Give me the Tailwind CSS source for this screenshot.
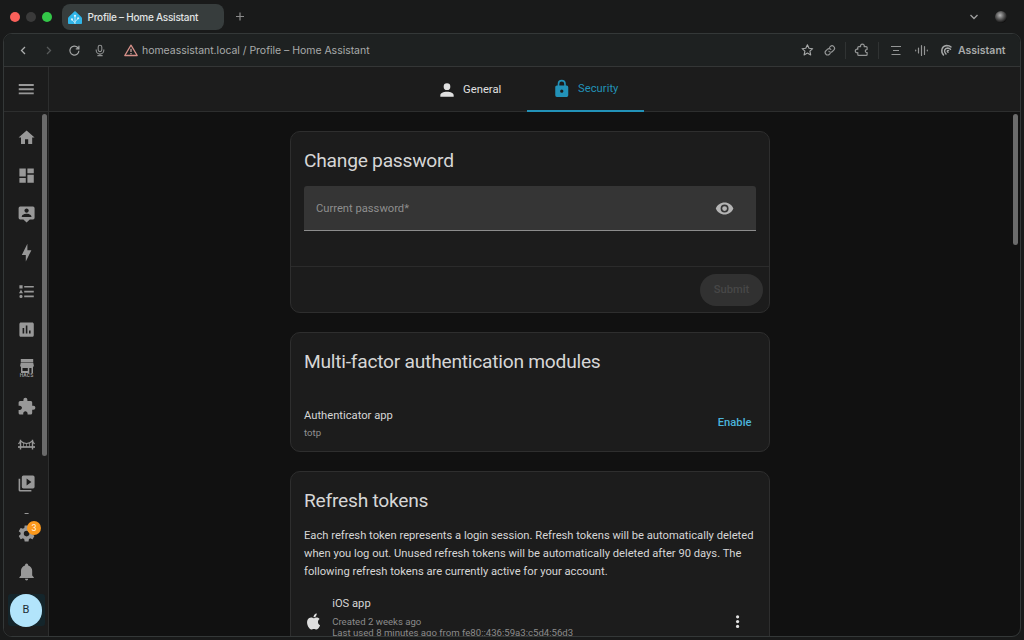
<!DOCTYPE html>
<html lang="en">
<head>
<meta charset="utf-8">
<title>Profile – Home Assistant</title>
<script src="https://cdn.jsdelivr.net/npm/@tailwindcss/browser@4"></script>
</head>
<body class="w-[1024px] h-[640px] overflow-hidden bg-[#191a1a] font-[Roboto,sans-serif] flex flex-col">

<!-- Tab strip -->
<div class="h-[33px] shrink-0 flex items-center pl-[10px] pr-[17px]">
  <div class="flex gap-[6px]">
    <span class="size-[10px] rounded-full bg-[#f9605a]"></span>
    <span class="size-[10px] rounded-full bg-[#3a3a3a]"></span>
    <span class="size-[10px] rounded-full bg-[#33c748]"></span>
  </div>
  <div class="ml-[10px] mt-[1px] w-[162px] h-[26px] rounded-[8px] bg-[#373d3d] flex items-center pl-[6px] whitespace-nowrap">
    <svg class="mt-[1px] w-[14px] h-[13px]" viewBox="0 0 240 240" preserveAspectRatio="none">
      <path fill="#30b5e8" d="M240 225a15 15 0 0 1-15 15H15a15 15 0 0 1-15-15v-90c0-8 5-20 11-26l98-98c6-6 16-6 22 0l98 98c6 6 11 18 11 26Z"/>
      <path fill="none" stroke="#d8f2fc" stroke-width="15" d="M120 240V92M120 215l-52-52M120 195l54-54"/>
      <circle cx="120" cy="88" r="20" fill="#d8f2fc"/><circle cx="68" cy="155" r="19" fill="#d8f2fc"/><circle cx="174" cy="135" r="19" fill="#d8f2fc"/>
    </svg>
    <span class="ml-[5.500px] font-[Inter,sans-serif] text-[10px] tracking-[-0.240px] font-medium text-[#e2e4e4]">Profile – Home Assistant</span>
  </div>
  <svg class="ml-[11px] size-[10px]" viewBox="0 0 10 10" stroke="#8b8b8b" stroke-width="1.2"><path d="M5 .5v8M1 4.500h8"/></svg>
  <svg class="ml-auto w-[10px] h-[10px]" viewBox="0 0 10 10" fill="none" stroke="#a0a0a0" stroke-width="1.3"><path d="M1.500 3 5 6.500l3.500-3.500"/></svg>
  <span class="ml-[16px] size-[12px] rounded-full bg-[radial-gradient(circle_at_42%_36%,#b4b4b4,#5a5a5a_38%,#0c0c0c_75%)]"></span>
</div>

<!-- Browser window -->
<div class="ml-[3px] w-[1018px] h-[604px] shrink-0 border border-[#343838] rounded-[9px] overflow-hidden flex flex-col bg-[#111111]">

  <!-- Address bar -->
  <div class="h-[33px] shrink-0 bg-[#1e2121] border-b border-[#343636] flex items-center pl-[11px] font-[Inter,sans-serif] text-[#a9abab] whitespace-nowrap">
    <svg class="size-[16px]" viewBox="0 0 16 16" fill="none" stroke="#adafaf" stroke-width="1.3"><path d="M10 5 6.500 8.500l3.500 3.500"/></svg>
    <svg class="ml-[9px] size-[16px]" viewBox="0 0 16 16" fill="none" stroke="#575a5a" stroke-width="1.3"><path d="M7 5l3.500 3.500L7 12"/></svg>
    <svg class="ml-[10px] size-[16px]" viewBox="0 0 16 16" fill="none" stroke="#a3a5a5" stroke-width="1.2"><path d="M12.900 8.700A4.500 4.500 0 1 1 11.700 5.500L12.900 6.700M12.900 3.700v3.100H9.800"/></svg>
    <svg class="ml-[10px] size-[16px]" viewBox="0 0 16 16" fill="none" stroke="#8f9191" stroke-width="1.1"><rect x="6.200" y="3.200" width="3.600" height="6.400" rx="1.800"/><path d="M4.200 7.600v.6a3.800 3.800 0 0 0 7.600 0v-.6M8 12V13.600M5.400 13.600h5.200"/></svg>
    <svg class="ml-[15px] size-[16px]" viewBox="0 0 16 16" fill="none" stroke="#d58f88" stroke-width="1.3"><path stroke-linejoin="round" d="M8 3.200 14.200 13.500H1.800Z"/><path stroke="#c9a39f" d="M8 6.700v3.400M8 11v1.200"/></svg>
    <span class="relative top-[1px] ml-[3px] text-[10.500px] tracking-[-0.03px]">homeassistant.local / Profile – Home Assistant</span>

    <div class="ml-auto flex items-center pr-[15px]">
      <svg class="size-[14px]" viewBox="0 0 14 14" fill="none" stroke="#a6a8a8" stroke-width="1.1" stroke-linejoin="round"><path d="M6.400 1.800 8 5.300l3.700.4-2.800 2.500.8 3.700L6.400 10l-3.300 1.900.8-3.700-2.800-2.500 3.700-.4Z"/></svg>
      <svg class="ml-[8px] size-[14px]" viewBox="0 0 24 24" fill="none" stroke="#949696" stroke-width="1.900" stroke-linecap="round"><path d="M10 14.200a4 4 0 0 0 6 .4l2.500-2.500a4.200 4.200 0 0 0-6-6l-1.500 1.500"/><path d="M13.500 11.200a4 4 0 0 0-6-.4l-2.500 2.500a4.200 4.200 0 0 0 6 6l1.500-1.500"/></svg>
      <span class="ml-[8px] w-px h-[17px] bg-[#303333]"></span>
      <svg class="ml-[8px] size-[16px]" viewBox="0 0 16 16" fill="none" stroke="#949696" stroke-width="1.200" stroke-linejoin="round"><path d="M6.600 4.600a1.900 1.900 0 1 1 3.600 0H12.200a.9.900 0 0 1 .9.900V7.500L12 7.800a1.400 1.400 0 0 0 0 2.400l1.100.4v1.800a.9.900 0 0 1-.9.900H4.700a.9.900 0 0 1-.9-.9V10.600a1.800 1.800 0 1 1 0-3.300V5.500a.9.900 0 0 1 .9-.9Z"/></svg>
      <span class="ml-[8px] w-px h-[17px] bg-[#303333]"></span>
      <svg class="ml-[10px] size-[14px]" viewBox="0 0 14 14" stroke="#949696" stroke-width="1.200"><path d="M2 3.500h10M4 7.500h6M2.500 11.500h9"/></svg>
      <svg class="ml-[11px] w-[15px] h-[14px]" viewBox="0 0 15 14" stroke="#949696" stroke-width="1.200" stroke-linecap="round"><path d="M1.700 7.200v.6M4.500 5v5M7.500 2.500v10M10.500 3.500v8M13.300 7.200v.6"/></svg>
      <svg class="ml-[11px] size-[14px]" viewBox="0 0 14 14" fill="none" stroke="#a3a5a5" stroke-width="1.500" stroke-linecap="round"><path d="M3.500 12C.5 8.500 1.500 3 6.500 2.500c2 0 3.500.3 4.500 1.500M6 11C3.200 8.300 4.700 5.100 7.700 5c1.400 0 2.300.5 2.800 1.300M8 9.300C6.700 8.200 7.300 7.300 8.500 7.500"/></svg>
      <span class="relative top-[1px] ml-[4px] w-[47px] text-[10.500px] font-semibold text-[#a9abab]">Assistant</span>
    </div>
  </div>

  <div class="flex-1 min-h-0 flex">
    <!-- Sidebar -->
    <nav class="w-[45px] shrink-0 bg-[#1c1c1c] border-r border-[#2d2e2e] flex flex-col text-[#989898]">
      <div class="h-[45px] shrink-0 border-b border-[#2d2e2e] flex items-center justify-center">
        <svg class="size-[20px]" viewBox="0 0 24 24" fill="currentColor"><path d="M3.300,6.100H21.300V8.400H3.300V6.100M3.300,11.100H21.300V13.400H3.300V11.100M3.300,16.100H21.300V18.400H3.300V16.100Z"/></svg>
      </div>
      <div class="relative h-[402px] shrink-0 overflow-hidden pt-[6.500px]">
        <ul class="pl-[1px] [&>li]:h-[38.400px] [&>li]:flex [&>li]:items-center [&>li]:justify-center">
          <li><svg class="size-[19.200px]" viewBox="0 0 24 24" fill="currentColor"><path d="M10,20V14H14V20H19V12H22L12,3L2,12H5V20H10Z"/></svg></li>
          <li><svg class="size-[19.200px]" viewBox="0 0 24 24" fill="currentColor"><path d="M13,3V9H21V3M13,21H21V11H13M3,21H11V15H3M3,13H11V3H3V13Z"/></svg></li>
          <li><svg class="size-[19.200px]" viewBox="0 0 24 24" fill="currentColor" fill-rule="evenodd"><path d="M20,2H4A2,2 0 0,0 2,4V16A2,2 0 0,0 4,18H8L12,22L16,18H20A2,2 0 0,0 22,16V4A2,2 0 0,0 20,2M12,4.300C13.500,4.300 14.700,5.500 14.700,7C14.700,8.500 13.500,9.700 12,9.700C10.500,9.700 9.300,8.500 9.300,7C9.300,5.500 10.500,4.300 12,4.300M18,15H6V14.100C6,12.100 10,11 12,11C14,11 18,12.100 18,14.100V15Z"/></svg></li>
          <li><svg class="size-[19.200px]" viewBox="0 0 24 24" fill="currentColor"><path d="M11 15H6L13 1V9H18L11 23V15Z"/></svg></li>
          <li><svg class="size-[19.200px]" viewBox="0 0 24 24" fill="currentColor"><path d="M5,9.500L7.500,14H2.500L5,9.500M3,4H7V8H3V4M5,20A2,2 0 0,0 7,18A2,2 0 0,0 5,16A2,2 0 0,0 3,18A2,2 0 0,0 5,20M9,5V7H21V5H9M9,19H21V17H9V19M9,13H21V11H9V13Z"/></svg></li>
          <li><svg class="size-[19.200px]" viewBox="0 0 24 24" fill="currentColor" fill-rule="evenodd"><path d="M9 17H7V10H9V17M13 17H11V7H13V17M17 17H15V13H17V17M19 3H5C3.890 3 3 3.890 3 5V19C3 20.100 3.890 21 5 21H19C20.100 21 21 20.100 21 19V5C21 3.890 20.100 3 19 3Z"/></svg></li>
          <li><div class="flex flex-col items-center">
            <svg class="w-[14px] h-[14px]" viewBox="0 0 14 14" fill="currentColor" fill-rule="evenodd"><path d="M.8 0H13.200V3H.8ZM.8 3.500H13.200L14 7.500H0ZM1 7.500H13V14H11.500V9H9.300V14H1ZM2.500 9V12H7.800V9Z"/></svg>
            <span class="text-[5px] leading-[5px] font-bold tracking-[0.100px]">HACS</span>
          </div></li>
          <li><svg class="size-[19.200px]" viewBox="0 0 24 24" fill="currentColor"><path d="M20.500,11H19V7C19,5.890 18.100,5 17,5H13V3.500A2.500,2.500 0 0,0 10.500,1A2.500,2.500 0 0,0 8,3.500V5H4A2,2 0 0,0 2,7V10.800H3.500C5,10.800 6.200,12 6.200,13.500C6.200,15 5,16.200 3.500,16.200H2V20A2,2 0 0,0 4,22H7.800V20.500C7.800,19 9,17.800 10.500,17.800C12,17.800 13.200,19 13.200,20.500V22H17A2,2 0 0,0 19,20V16H20.500A2.500,2.500 0 0,0 23,13.500A2.500,2.500 0 0,0 20.500,11Z"/></svg></li>
          <li><svg class="w-[17px] h-[11px]" viewBox="0 0 17 11" fill="none" stroke="currentColor"><path stroke-width="1.400" d="M2.500 .8V10.500M14.500 .8V10.500"/><path stroke-width="1.700" d="M0 8H17"/><path stroke-width="1.100" d="M2.500 2Q8.500 7 14.500 2M2.500 2Q2 4 .3 4.700M14.500 2Q15 4 16.700 4.700"/><path stroke-width=".7" d="M5.500 4V8M8.500 4.500V8M11.500 4V8"/></svg></li>
          <li><svg class="size-[19.200px]" viewBox="0 0 24 24" fill="currentColor" fill-rule="evenodd"><path d="M4,6H2V20A2,2 0 0,0 4,22H18V20H4V6M20,2A2,2 0 0,1 22,4V16A2,2 0 0,1 20,18H8A2,2 0 0,1 6,16V4A2,2 0 0,1 8,2H20M12,14.500L18,10L12,5.500V14.500Z"/></svg></li>
          <li><svg class="size-[19.200px]" viewBox="0 0 24 24" fill="currentColor"><path d="M9.500 1.200H14.500V4H20V22H4V4H9.500Z"/></svg></li>
        </ul>
        <div class="absolute right-[1.500px] top-[2px] w-[5px] h-[342px] rounded-full bg-[#6a6a6a]"></div>
      </div>
      <div class="relative h-[38.400px] shrink-0 flex items-center justify-center pl-[1px]">
        <svg class="size-[19.200px]" viewBox="0 0 24 24" fill="currentColor"><path d="M12,15.500A3.500,3.500 0 0,1 8.500,12A3.500,3.500 0 0,1 12,8.500A3.500,3.500 0 0,1 15.500,12A3.500,3.500 0 0,1 12,15.500M19.430,12.970C19.470,12.650 19.500,12.330 19.500,12C19.500,11.670 19.470,11.340 19.430,11L21.540,9.370C21.730,9.220 21.780,8.950 21.660,8.730L19.660,5.270C19.540,5.050 19.270,4.960 19.050,5.050L16.560,6.050C16.040,5.660 15.500,5.320 14.870,5.070L14.500,2.420C14.460,2.180 14.250,2 14,2H10C9.750,2 9.540,2.180 9.500,2.420L9.130,5.070C8.500,5.320 7.960,5.660 7.440,6.050L4.950,5.050C4.730,4.960 4.460,5.050 4.340,5.270L2.340,8.730C2.210,8.950 2.270,9.220 2.460,9.370L4.570,11C4.530,11.340 4.500,11.670 4.500,12C4.500,12.330 4.530,12.650 4.570,12.970L2.460,14.630C2.270,14.780 2.210,15.050 2.340,15.270L4.340,18.730C4.460,18.950 4.730,19.030 4.950,18.950L7.440,17.940C7.960,18.340 8.500,18.680 9.130,18.930L9.500,21.580C9.540,21.820 9.750,22 10,22H14C14.250,22 14.460,21.820 14.500,21.580L14.870,18.930C15.500,18.670 16.040,18.340 16.560,17.940L19.050,18.950C19.270,19.030 19.540,18.950 19.660,18.730L21.660,15.270C21.780,15.050 21.730,14.780 21.540,14.630L19.430,12.970Z"/></svg>
        <span class="absolute left-[23px] top-[7px] size-[14px] rounded-full bg-[#fb981c] text-[#fff1de] text-[9px] leading-[14px] text-center">3</span>
      </div>
      <div class="h-[38.400px] shrink-0 flex items-center justify-center pl-[1px] pt-[1px]">
        <svg class="size-[19.200px]" viewBox="0 0 24 24" fill="currentColor"><path d="M21,19V20H3V19L5,17V11C5,7.900 7.030,5.170 10,4.290C10,4.190 10,4.100 10,4A2,2 0 0,1 12,2A2,2 0 0,1 14,4C14,4.100 14,4.190 14,4.290C16.970,5.170 19,7.900 19,11V17L21,19M14,21A2,2 0 0,1 12,23A2,2 0 0,1 10,21"/></svg>
      </div>
      <div class="h-[38.400px] shrink-0 flex items-center justify-center pt-[1px]">
        <div class="w-[37px] h-[32px] rounded-[3px] bg-[#14252b] flex items-center justify-center">
          <span class="size-[32.500px] shrink-0 rounded-full bg-[#b2e4fb] text-[#1d2c33] text-[11px] flex items-center justify-center">B</span>
        </div>
      </div>
    </nav>

    <!-- Main panel -->
    <div class="flex-1 min-w-0 flex flex-col">
      <header class="h-[45px] shrink-0 bg-[#1c1c1c] border-b border-[#2d2e2e] flex pl-[361px] text-[11.200px] tracking-[0.050px]">
        <div class="w-[117px] h-[45px] flex items-center pl-[27px] text-[#e0e0e0]">
          <svg class="size-[20px]" viewBox="0 0 24 24" fill="currentColor"><path d="M12,4A4,4 0 0,1 16,8A4,4 0 0,1 12,12A4,4 0 0,1 8,8A4,4 0 0,1 12,4M12,14C16.420,14 20,15.790 20,18V20H4V18C4,15.790 7.580,14 12,14Z"/></svg>
          <span class="ml-[6px] pt-[1px]">General</span>
        </div>
        <div class="w-[117px] h-[45px] flex items-center pl-[25px] text-[#2292b8] border-b-2 border-[#2292b8]">
          <svg class="size-[19.500px]" viewBox="0 0 24 24" fill="currentColor" fill-rule="evenodd"><path d="M12,17A2,2 0 0,0 14,15C14,13.890 13.100,13 12,13A2,2 0 0,0 10,15A2,2 0 0,0 12,17M18,8A2,2 0 0,1 20,10V20A2,2 0 0,1 18,22H6A2,2 0 0,1 4,20V10C4,8.890 4.900,8 6,8H7V6A5,5 0 0,1 12,1A5,5 0 0,1 17,6V8H18M12,3A3,3 0 0,0 9,6V8H15V6A3,3 0 0,0 12,3Z"/></svg>
          <span class="ml-[6.500px] pt-[2px]">Security</span>
        </div>
      </header>

      <main class="relative flex-1 min-h-0 overflow-hidden pt-[19px] pl-[241px] text-[11.200px] text-[#d6d6d6]">
        <div class="w-[480px] flex flex-col gap-[19px]">

          <section class="h-[182px] shrink-0 rounded-[10px] border border-[#2e2e2e] bg-[#1c1c1c] flex flex-col">
            <h1 class="h-[54px] pt-[4px] px-[13px] flex items-center text-[19.200px] tracking-[-0.240px]">Change password</h1>
            <div class="mx-[13px] h-[45px] rounded-t-[3px] bg-[#353535] border-b border-[#8c8c8c] flex items-center pl-[12px] pr-[22px]">
              <span class="pt-[3px] text-[#8e8e8e]">Current password*</span>
              <svg class="ml-auto mt-[1px] size-[19.200px] text-[#b4b4b4]" viewBox="0 0 24 24" fill="currentColor" fill-rule="evenodd"><path d="M12,9A3,3 0 0,0 9,12A3,3 0 0,0 12,15A3,3 0 0,0 15,12A3,3 0 0,0 12,9M12,17A5,5 0 0,1 7,12A5,5 0 0,1 12,7A5,5 0 0,1 17,12A5,5 0 0,1 12,17M12,4.500C7,4.500 2.730,7.610 1,12C2.730,16.390 7,19.500 12,19.500C17,19.500 21.270,16.390 23,12C21.270,7.610 17,4.500 12,4.500Z"/></svg>
            </div>
            <div class="mt-auto h-[46px] border-t border-[#2b2b2b] flex items-center justify-end pr-[6px]">
              <button class="w-[63px] h-[32px] pt-[1px] rounded-full bg-[#313131] text-[#474747] font-medium">Submit</button>
            </div>
          </section>

          <section class="h-[120px] shrink-0 rounded-[10px] border border-[#2e2e2e] bg-[#1c1c1c] px-[13px]">
            <h1 class="h-[54px] pt-[4px] flex items-center text-[19.200px] tracking-[-0.240px]">Multi-factor authentication modules</h1>
            <div class="mt-[17px] h-[38px] flex items-center">
              <div class="pt-[1px]">
                <div class="leading-[19px]">Authenticator app</div>
                <div class="leading-[16px] text-[9.600px] text-[#919191]">totp</div>
              </div>
              <button class="ml-auto mr-[4.500px] text-[#4bb4dc] font-medium">Enable</button>
            </div>
          </section>

          <section class="h-[220px] shrink-0 rounded-[10px] border border-[#2e2e2e] bg-[#1c1c1c] pl-[13px]">
            <h1 class="h-[54px] pt-[4px] flex items-center text-[19.200px] tracking-[-0.240px]">Refresh tokens</h1>
            <p class="mt-[1px] leading-[18px] whitespace-nowrap">Each refresh token represents a login session. Refresh tokens will be automatically deleted<br>when you log out. Unused refresh tokens will be automatically deleted after 90 days. The<br>following refresh tokens are currently active for your account.</p>
            <div class="mt-[13px] h-[56px] flex items-center pr-[22px]">
              <svg class="size-[19.200px] text-[#dedede]" viewBox="0 0 24 24" fill="currentColor"><path d="M18.710,19.500C17.880,20.740 17,21.950 15.660,21.970C14.320,22 13.890,21.180 12.370,21.180C10.840,21.180 10.370,21.950 9.100,22C7.790,22.050 6.800,20.680 5.960,19.470C4.250,17 2.940,12.450 4.700,9.390C5.570,7.870 7.130,6.910 8.820,6.880C10.100,6.860 11.320,7.750 12.110,7.750C12.890,7.750 14.370,6.680 15.920,6.840C16.570,6.870 18.390,7.100 19.560,8.820C19.470,8.880 17.390,10.100 17.410,12.630C17.440,15.650 20.060,16.660 20.090,16.670C20.060,16.740 19.670,18.110 18.710,19.500M13,3.500C13.730,2.670 14.940,2.040 15.940,2C16.070,3.170 15.600,4.350 14.900,5.190C14.210,6.040 13.070,6.700 11.950,6.610C11.800,5.460 12.360,4.260 13,3.500Z"/></svg>
              <div class="ml-[9px] self-start whitespace-nowrap">
                <div class="leading-[20px]">iOS app</div>
                <div class="mt-[2px] leading-[11px] text-[9.600px] text-[#8b8b8b]">Created 2 weeks ago<br>Last used 8 minutes ago from fe80::436:59a3:c5d4:56d3</div>
              </div>
              <svg class="ml-auto size-[19.200px] text-[#e2e2e2]" viewBox="0 0 24 24" fill="currentColor"><circle cx="12" cy="6" r="2"/><circle cx="12" cy="12" r="2"/><circle cx="12" cy="18" r="2"/></svg>
            </div>
          </section>
        </div>
        <div class="absolute right-[2px] top-[2px] w-[5px] h-[131px] rounded-full bg-[#6b6b6b]"></div>
      </main>
    </div>
  </div>
</div>
</body>
</html>
